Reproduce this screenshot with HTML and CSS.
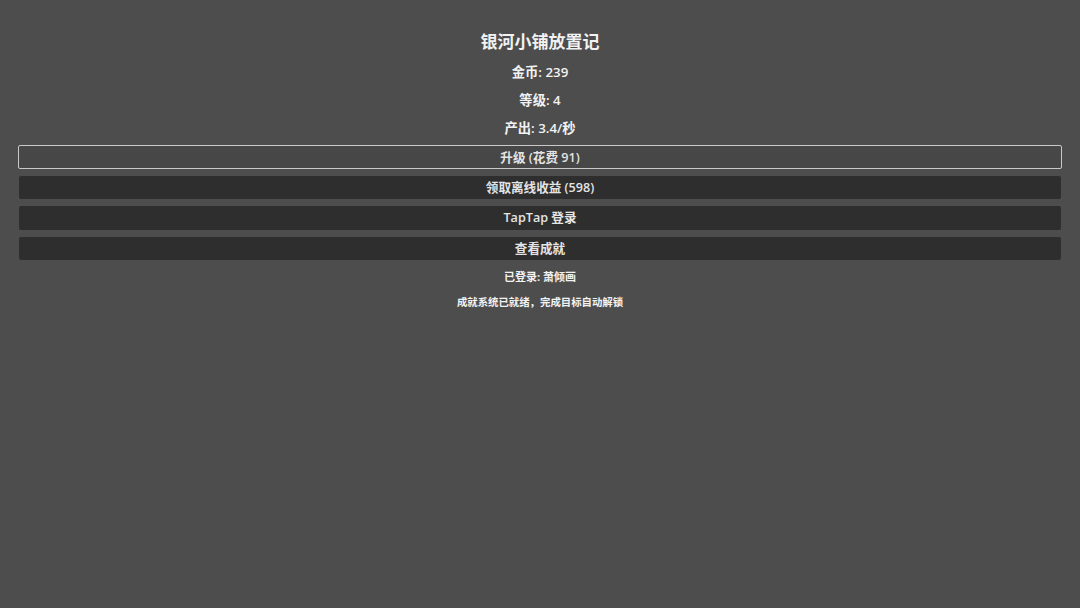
FILE: index.html
```html
<!DOCTYPE html>
<html lang="zh-CN">
<head>
<meta charset="utf-8">
<title>银河小铺放置记</title>
<link rel="stylesheet" href="styles.css">
</head>
<body>
<main class="screen">
  <h1 class="title">银河小铺放置记</h1>
  <div class="stat">金币: 239</div>
  <div class="stat">等级: 4</div>
  <div class="stat">产出: 3.4/秒</div>
  <div class="buttons">
    <button class="btn btn-focus">升级 (花费 91)</button>
    <button class="btn">领取离线收益 (598)</button>
    <button class="btn">TapTap 登录</button>
    <button class="btn">查看成就</button>
  </div>
  <div class="login">已登录: 萧倾画</div>
  <div class="hint">成就系统已就绪，完成目标自动解锁</div>
</main>
</body>
</html>
```
FILE: styles.css
```css
html, body {
  margin: 0;
  padding: 0;
  background: #4d4d4d;
  width: 1080px;
  height: 608px;
  overflow: hidden;
}
.screen {
  display: flex;
  flex-direction: column;
  align-items: stretch;
  padding: 30px 19px 0;
  font-family: "Open Sans", "Noto Sans CJK SC", sans-serif;
  color: #f2f2f2;
  text-align: center;
}
.title {
  margin: 0 0 4px;
  font-size: 17px;
  line-height: 24px;
  font-weight: 700;
}
.stat {
  font-size: 13.3px;
  line-height: 28px;
  font-weight: 600;
}
.buttons {
  display: flex;
  flex-direction: column;
  gap: 7px;
  margin-top: 3px;
}
.btn {
  height: 23.5px;
  padding: 0;
  border: 0;
  border-radius: 2px;
  background: #2e2e2e;
  color: #e4e4e4;
  font-family: "Open Sans", "Noto Sans CJK SC", sans-serif;
  font-size: 12.6px;
  font-weight: 600;
  line-height: 23px;
}
.btn-focus {
  background: #474747;
  border: 1px solid #c9c9c9;
  margin: 0 -1px;
  border-radius: 2px;
}
.login {
  margin-top: 7px;
  font-size: 11px;
  line-height: 20px;
  font-weight: 700;
}
.hint {
  margin-top: 5px;
  font-size: 10.4px;
  line-height: 20px;
  font-weight: 700;
}
```
